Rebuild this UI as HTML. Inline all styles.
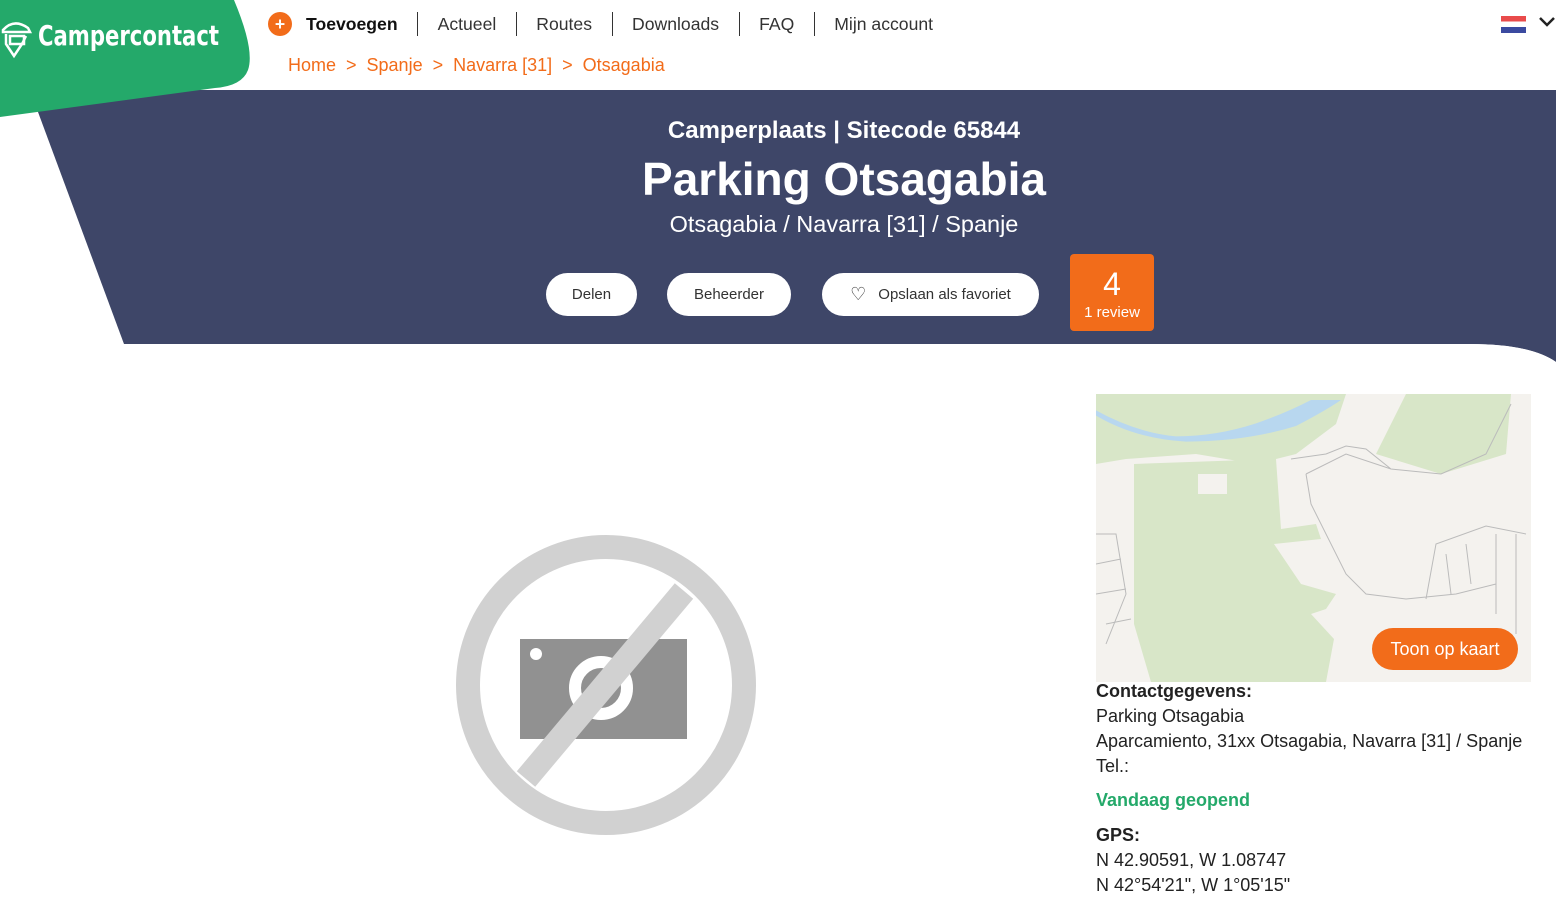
<!DOCTYPE html>
<html><head><meta charset="utf-8"><style>
*{margin:0;padding:0;box-sizing:border-box}
body{width:1556px;height:908px;overflow:hidden;background:#fff;font-family:"Liberation Sans",sans-serif;position:relative;color:#111}
.abs{position:absolute}
.nav{top:12px;left:268px;display:flex;align-items:center;font-size:17.6px;color:#333}
.nav span{padding:0 19.5px;border-left:1px solid #333;line-height:24px}
.nav span:first-of-type{border:none}
.bc{top:55px;left:288px;font-size:18px;color:#f26c1a}
.btn{background:#fff;border-radius:22px;height:43px;top:273px;font-size:15px;display:flex;align-items:center;justify-content:center;color:#333}
.info{left:1096px;font-size:18px;line-height:25px;color:#222}
</style></head><body>
<svg class="abs" style="left:0;top:0" width="1556" height="400">
<polygon points="38,90 1556,90 1556,344 124,344 38,112" fill="#3e4668"/>
<path d="M1470,344 Q1530,344 1556,362 L1556,344 Z" fill="#3e4668"/>
<path d="M1470,344 Q1530,344 1556,362 L1556,400 L1470,400Z" fill="#fff"/>
<path d="M0,0 L234,0 Q255,50 248,70 Q242,86 215,88 L0,117 Z" fill="#24a96a"/>
<g stroke="#fff" stroke-width="2.5" fill="none"><path d="M3,30 Q14,18 28,28 L30,32 L3,32Z"/><path d="M6,34 L6,44 L14,56 L22,44 L26,36"/><rect x="10" y="36" width="14" height="8"/></g>
</svg>
<div class="abs" style="left:38px;top:19px;font-size:28px;font-weight:bold;color:#fff;transform:scaleX(0.84);transform-origin:0 0;white-space:nowrap;font-family:'DejaVu Sans Condensed','Liberation Sans',sans-serif">Campercontact</div>
<div class="abs nav"><div style="width:24px;height:24px;border-radius:50%;background:#f26c1a;color:#fff;text-align:center;font-weight:bold;line-height:24px;margin-right:0">+</div><span style="font-weight:bold;color:#111;border:none;padding-left:14px">Toevoegen</span><span>Actueel</span><span>Routes</span><span>Downloads</span><span>FAQ</span><span>Mijn account</span></div>
<div class="abs bc">Home &nbsp;&gt;&nbsp; Spanje &nbsp;&gt;&nbsp; Navarra [31] &nbsp;&gt;&nbsp; Otsagabia</div>
<div class="abs" style="left:1501px;top:16px;width:25px;height:17px;background:linear-gradient(#e94b4b 0 33%,#fff 33% 66%,#3b4aa0 66%)"></div>
<svg class="abs" style="left:1538px;top:16px" width="18" height="12"><path d="M2,2 L9,9 L16,2" stroke="#222" stroke-width="2.5" fill="none"/></svg>
<div class="abs" style="left:0;width:1688px;top:117px;text-align:center;font-size:24px;font-weight:bold;color:#fff">Camperplaats | Sitecode 65844</div>
<div class="abs" style="left:0;width:1688px;top:152px;text-align:center;font-size:46px;font-weight:bold;color:#fff">Parking Otsagabia</div>
<div class="abs" style="left:0;width:1688px;top:211px;text-align:center;font-size:23.5px;color:#fff">Otsagabia / Navarra [31] / Spanje</div>
<div class="abs btn" style="left:546px;width:91px">Delen</div>
<div class="abs btn" style="left:667px;width:124px">Beheerder</div>
<div class="abs btn" style="left:822px;width:217px"><span style="margin-right:12px;font-size:18px">♡</span>Opslaan als favoriet</div>
<div class="abs" style="left:1070px;top:254px;width:84px;height:77px;background:#f26c1a;border-radius:4px;color:#fff;text-align:center"><div style="font-size:32px;line-height:40px;margin-top:10px">4</div><div style="font-size:15px">1 review</div></div>
<svg class="abs" style="left:456px;top:535px" width="301" height="300">
<rect x="64" y="104" width="167" height="100" fill="#919191"/>
<circle cx="80" cy="119" r="6" fill="#fff"/>
<circle cx="145" cy="153" r="26" stroke="#fff" stroke-width="12" fill="none"/>
<circle cx="150" cy="150" r="138" stroke="#d1d1d1" stroke-width="24" fill="none"/>
<line x1="228" y1="56" x2="70" y2="244" stroke="#d1d1d1" stroke-width="24"/>
</svg>
<svg class="abs" style="left:1096px;top:394px" width="435" height="288">
<rect width="435" height="288" fill="#f4f2ee"/>
<path d="M0,0 L250,0 L240,30 L200,60 L160,70 L100,60 L30,65 L0,70Z" fill="#d8e6c8"/>
<path d="M38,70 L180,65 L185,135 L220,130 L225,145 L178,150 L205,190 L240,200 L230,215 L215,220 L238,245 L230,288 L55,288 L38,230Z" fill="#d8e6c8"/>
<path d="M102,80 L131,80 L131,100 L102,100Z" fill="#f4f2ee"/>
<path d="M310,0 L415,0 L410,60 L345,80 L280,60Z" fill="#d8e6c8"/>
<path d="M0,12 Q40,30 90,32 Q150,32 200,20 Q230,8 245,0 L215,0 Q190,10 160,18 Q120,28 80,28 Q40,25 0,8Z" fill="#b8d7ef" transform="translate(0,6) scale(1,1.3)"/>
<path d="M0,140 L20,140 L30,200 L10,250 M0,170 L25,165 M0,200 L30,195 M10,230 L35,225" stroke="#bbb" fill="none"/>
<path d="M195,65 L230,60 L250,52 L270,55 L295,75 L345,80 L390,60 L415,10 M210,80 L250,60 L295,75 M210,80 L215,110 L250,180 L270,200 L310,205 L360,200 L400,190 M330,205 L340,150 L390,132 L430,140 M350,160 L355,200 M370,150 L375,190 M400,140 L400,220 M420,140 L420,240" stroke="#bbb" fill="none"/>
</svg>
<div class="abs" style="left:1372px;top:628px;width:146px;height:42px;border-radius:21px;background:#f26c1a;color:#fff;font-size:18px;text-align:center;line-height:42px">Toon op kaart</div>
<div class="abs info" style="top:679px"><b>Contactgegevens:</b><br>Parking Otsagabia<br>Aparcamiento, 31xx Otsagabia, Navarra [31] / Spanje<br>Tel.:</div>
<div class="abs info" style="top:788px;color:#24a96a;font-weight:bold">Vandaag geopend</div>
<div class="abs info" style="top:823px"><b>GPS:</b><br>N 42.90591, W 1.08747<br>N 42°54'21", W 1°05'15"</div>
</body></html>
